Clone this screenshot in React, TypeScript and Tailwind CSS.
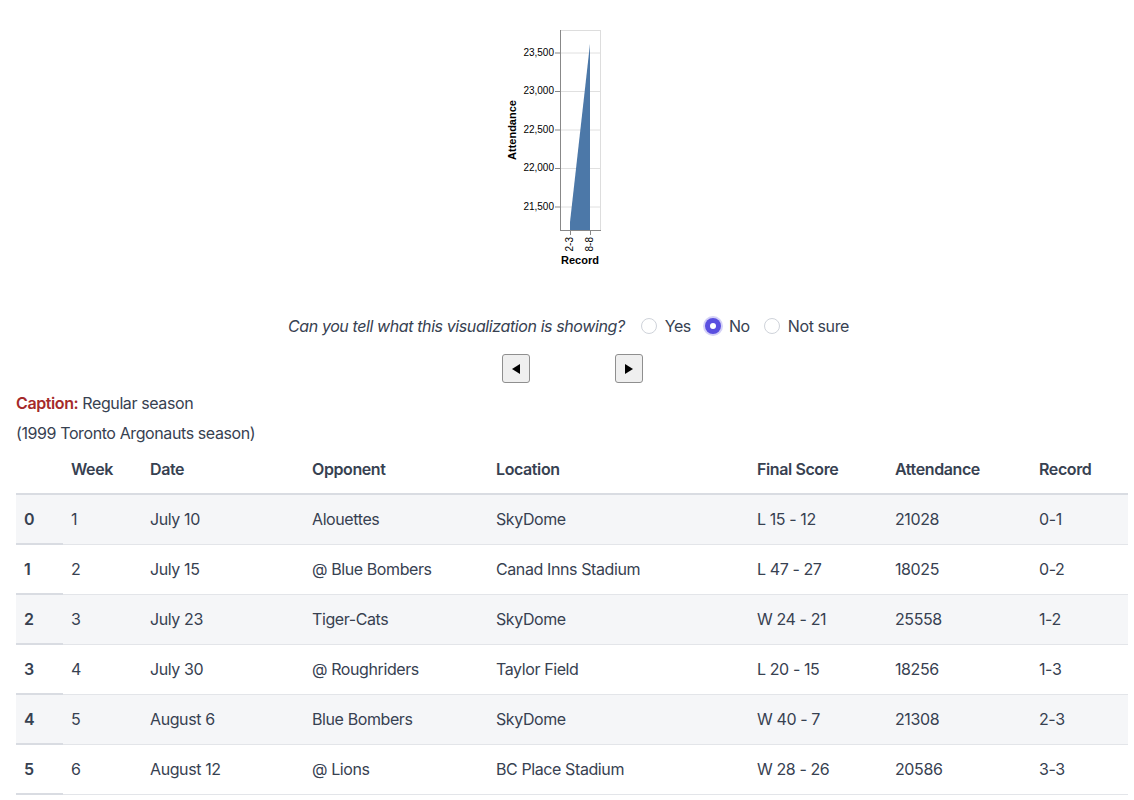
import { useState } from "react";

type Row = {
  week: number;
  date: string;
  opponent: string;
  location: string;
  score: string;
  attendance: number;
  record: string;
};

const rows: Row[] = [
  { week: 1, date: "July 10", opponent: "Alouettes", location: "SkyDome", score: "L 15 - 12", attendance: 21028, record: "0-1" },
  { week: 2, date: "July 15", opponent: "@ Blue Bombers", location: "Canad Inns Stadium", score: "L 47 - 27", attendance: 18025, record: "0-2" },
  { week: 3, date: "July 23", opponent: "Tiger-Cats", location: "SkyDome", score: "W 24 - 21", attendance: 25558, record: "1-2" },
  { week: 4, date: "July 30", opponent: "@ Roughriders", location: "Taylor Field", score: "L 20 - 15", attendance: 18256, record: "1-3" },
  { week: 5, date: "August 6", opponent: "Blue Bombers", location: "SkyDome", score: "W 40 - 7", attendance: 21308, record: "2-3" },
  { week: 6, date: "August 12", opponent: "@ Lions", location: "BC Place Stadium", score: "W 28 - 26", attendance: 20586, record: "3-3" },
];

const yTicks = [
  { label: "23,500", y: 33 },
  { label: "23,000", y: 71.5 },
  { label: "22,500", y: 110 },
  { label: "22,000", y: 148.5 },
  { label: "21,500", y: 187 },
];

function AreaChart() {
  return (
    <svg
      width="154"
      height="255"
      viewBox="0 0 154 255"
      className="tracking-normal"
      style={{ fontFamily: "'Liberation Sans', Arial, sans-serif" }}
    >
      {/* grid */}
      {yTicks.map((t) => (
        <line key={t.label} x1="70" x2="110" y1={t.y} y2={t.y} stroke="#e0e0e0" strokeWidth="1" />
      ))}
      <rect x="70.5" y="10.5" width="40" height="200" fill="none" stroke="#dddddd" />
      {/* area */}
      <polygon points="80,210 80,202 100,24 100,210" fill="#4c78a8" />
      {/* y axis */}
      <line x1="70.5" x2="70.5" y1="10" y2="210.5" stroke="#888" />
      {yTicks.map((t) => (
        <g key={t.label + "t"}>
          <line x1="65" x2="70" y1={t.y} y2={t.y} stroke="#888" />
          <text x="64" y={t.y} textAnchor="end" dominantBaseline="middle" fontSize="10" fill="#000">
            {t.label}
          </text>
        </g>
      ))}
      <text
        transform="translate(23,110) rotate(-90)"
        textAnchor="middle"
        dominantBaseline="middle"
        fontSize="11"
        fontWeight="bold"
        fill="#000"
      >
        Attendance
      </text>
      {/* x axis */}
      <line x1="70" x2="111" y1="210.5" y2="210.5" stroke="#888" />
      {[
        { x: 80, label: "2-3" },
        { x: 100, label: "8-8" },
      ].map((t) => (
        <g key={t.label}>
          <line x1={t.x + 0.5} x2={t.x + 0.5} y1="210" y2="215" stroke="#888" />
          <text
            transform={`translate(${t.x + 0.5},217) rotate(-90)`}
            textAnchor="end"
            dominantBaseline="middle"
            fontSize="10"
            fill="#000"
          >
            {t.label}
          </text>
        </g>
      ))}
      <text x="90" y="241" textAnchor="middle" dominantBaseline="middle" fontSize="11" fontWeight="bold" fill="#000">
        Record
      </text>
    </svg>
  );
}

function Radio({ label, checked, onClick }: { label: string; checked: boolean; onClick: () => void }) {
  return (
    <label className="flex cursor-pointer items-center gap-[8px]" onClick={onClick}>
      {checked ? (
        <span className="flex h-[16px] w-[16px] items-center justify-center rounded-full bg-[#5a4fe0] ring-2 ring-[#d4d1f7]">
          <span className="h-[6px] w-[6px] rounded-full bg-white" />
        </span>
      ) : (
        <span className="h-[16px] w-[16px] rounded-full border border-[#cfd3da] bg-white" />
      )}
      <span>{label}</span>
    </label>
  );
}

export default function App() {
  const [answer, setAnswer] = useState("No");

  return (
    <div
      className="min-h-[800px] bg-white pt-[20px] text-[16px] tracking-[-0.025em] text-[#374151]"
      style={{ fontFamily: "Inter, 'Noto Sans', sans-serif" }}
    >
      <div className="flex justify-center pr-[1px]">
        <AreaChart />
      </div>

      <div className="mt-[39px] flex items-center justify-center gap-[14px] pl-[3px]">
        <span className="mr-[2px] italic">Can you tell what this visualization is showing?</span>
        {["Yes", "No", "Not sure"].map((o) => (
          <Radio key={o} label={o} checked={answer === o} onClick={() => setAnswer(o)} />
        ))}
      </div>

      <div className="mt-[16px] flex justify-center gap-[85px] pl-[10px]">
        <button className="flex h-[29px] w-[28px] items-center justify-center rounded-[3px] border border-[#8f8f8f] bg-[#efefef]">
          <svg width="10" height="10" viewBox="0 0 10 10">
            <polygon points="9,0 9,10 1,5" fill="#000" />
          </svg>
        </button>
        <button className="flex h-[29px] w-[28px] items-center justify-center rounded-[3px] border border-[#8f8f8f] bg-[#efefef]">
          <svg width="10" height="10" viewBox="0 0 10 10">
            <polygon points="1,0 1,10 9,5" fill="#000" />
          </svg>
        </button>
      </div>

      <div className="px-[16px] pt-[8px]">
        <div className="leading-[24px]">
          <span className="font-semibold text-[#a52a2a]">Caption:</span> Regular season
        </div>
        <div className="mt-[6px] leading-[24px]">(1999 Toronto Argonauts season)</div>

        <table className="mt-[3px] w-[1112px] table-fixed border-collapse text-left">
          <colgroup>
            <col className="w-[47px]" />
            <col className="w-[79px]" />
            <col className="w-[162px]" />
            <col className="w-[184px]" />
            <col className="w-[261px]" />
            <col className="w-[138px]" />
            <col className="w-[144px]" />
            <col className="w-[97px]" />
          </colgroup>
          <thead>
            <tr className="h-[46px] border-b-2 border-[#d9dce2]">
              <th className="px-[8px] pb-[4px]" />
              <th className="px-[8px] pb-[4px] font-semibold">Week</th>
              <th className="px-[8px] pb-[4px] font-semibold">Date</th>
              <th className="px-[8px] pb-[4px] font-semibold">Opponent</th>
              <th className="px-[8px] pb-[4px] font-semibold">Location</th>
              <th className="px-[8px] pb-[4px] font-semibold">Final Score</th>
              <th className="px-[8px] pb-[4px] font-semibold">Attendance</th>
              <th className="px-[8px] pb-[4px] font-semibold">Record</th>
            </tr>
          </thead>
          <tbody>
            {rows.map((r, i) => (
              <tr key={i} className={i % 2 === 0 ? "h-[50px] bg-[#f5f6f8]" : "h-[50px] bg-white"}>
                <th className="border-b-2 border-[#d9dce2] px-[8px] font-semibold">{i}</th>
                <td className="border-b border-[#e3e5e9] px-[8px]">{r.week}</td>
                <td className="border-b border-[#e3e5e9] px-[8px]">{r.date}</td>
                <td className="border-b border-[#e3e5e9] px-[8px]">{r.opponent}</td>
                <td className="border-b border-[#e3e5e9] px-[8px]">{r.location}</td>
                <td className="border-b border-[#e3e5e9] px-[8px]">{r.score}</td>
                <td className="border-b border-[#e3e5e9] px-[8px]">{r.attendance}</td>
                <td className="border-b border-[#e3e5e9] px-[8px]">{r.record}</td>
              </tr>
            ))}
          </tbody>
        </table>
      </div>
    </div>
  );
}
